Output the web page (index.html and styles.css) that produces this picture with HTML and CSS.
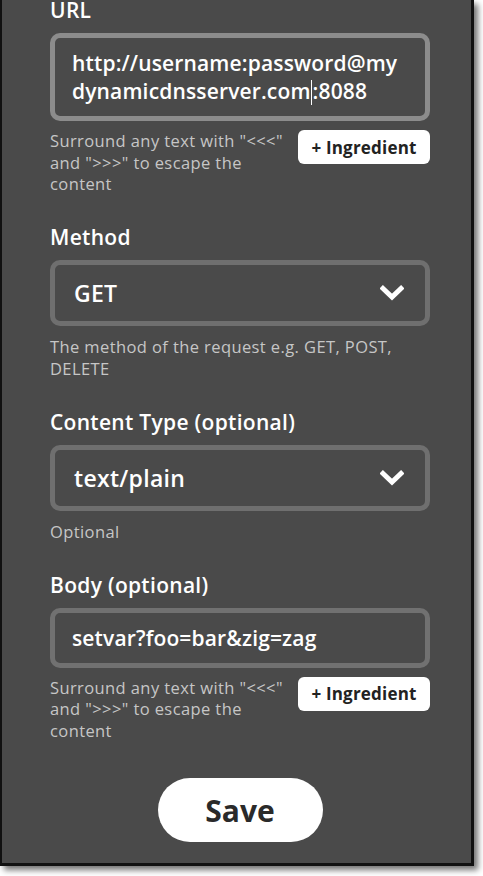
FILE: index.html
```html
<!DOCTYPE html>
<html>
<head>
<meta charset="utf-8">
<link rel="stylesheet" href="styles.css">
</head>
<body>
<div class="panel">
  <div class="form">
    <div class="field first">
      <div class="label">URL</div>
      <div class="input focused multi">http://username:password@my<br>dynamicdnsserver.com<span class="caret"></span>:8088</div>
      <div class="help-row">
        <p class="help">Surround any text with "&lt;&lt;&lt;"<br>and "&gt;&gt;&gt;" to escape the<br>content</p>
        <span class="ingredient">+ Ingredient</span>
      </div>
    </div>
    <div class="field">
      <div class="label">Method</div>
      <div class="select"><span class="value">GET</span>
        <svg class="chev" width="24" height="16" viewBox="0 0 24 16"><polyline points="3,3.5 12,12 21,3.5" fill="none" stroke="#fff" stroke-width="5" stroke-linecap="square"/></svg>
      </div>
      <p class="help">The method of the request e.g. GET, POST,<br>DELETE</p>
    </div>
    <div class="field">
      <div class="label">Content Type (optional)</div>
      <div class="select"><span class="value">text/plain</span>
        <svg class="chev" width="24" height="16" viewBox="0 0 24 16"><polyline points="3,3.5 12,12 21,3.5" fill="none" stroke="#fff" stroke-width="5" stroke-linecap="square"/></svg>
      </div>
      <p class="help">Optional</p>
    </div>
    <div class="field">
      <div class="label">Body (optional)</div>
      <div class="input single">setvar?foo=bar&amp;zig=zag</div>
      <div class="help-row">
        <p class="help">Surround any text with "&lt;&lt;&lt;"<br>and "&gt;&gt;&gt;" to escape the<br>content</p>
        <span class="ingredient">+ Ingredient</span>
      </div>
    </div>
    <div class="actions">
      <span class="save">Save</span>
    </div>
  </div>
</div>
</body>
</html>
```
FILE: styles.css
```css
html, body {
  margin: 0;
  padding: 0;
  background: #ffffff;
}
body {
  font-family: "Open Sans", "Liberation Sans", sans-serif;
  width: 483px;
  height: 876px;
  overflow: hidden;
}
.panel {
  width: 469px;
  height: 863px;
  background: #4a4a4a;
  border-left: 2px solid #111;
  border-right: 3px solid #111;
  border-bottom: 3px solid #111;
  box-shadow: 4px 4px 6px rgba(0,0,0,0.55);
  overflow: hidden;
}
.form {
  padding: 0 41px 0 48px;
  margin-top: -3px;
  display: flex;
  flex-direction: column;
}
.field {
  display: flex;
  flex-direction: column;
  margin-top: 29.5px;
}
.field.first {
  margin-top: 0;
}
.label {
  color: #ffffff;
  font-size: 21px;
  font-weight: 600;
  letter-spacing: 0.3px;
  line-height: 26px;
  margin-bottom: 10px;
}
.input {
  box-sizing: border-box;
  border: 5px solid #717171;
  border-radius: 10px;
  color: #ffffff;
  font-size: 21px;
  font-weight: 600;
  letter-spacing: 0.15px;
  padding: 0 17px;
}
.input.focused {
  border-color: #8c8c8c;
}
.input.multi {
  height: 88px;
  line-height: 28px;
  padding-top: 11px;
}
.input.single {
  height: 60px;
  display: flex;
  align-items: center;
}
.caret {
  display: inline-block;
  width: 1px;
  height: 25px;
  background: #fff;
  vertical-align: -6px;
  margin: 0 1px 0 0;
}
.select {
  box-sizing: border-box;
  height: 66px;
  border: 5px solid #6f6f6f;
  border-radius: 10px;
  display: flex;
  align-items: center;
  justify-content: space-between;
  padding: 0 21px 0 19px;
  color: #ffffff;
  font-size: 23px;
  font-weight: 600;
  letter-spacing: 0.3px;
}
.chev {
  display: block;
}
.help {
  margin: 10px 0 0 0;
  color: #c6c6c6;
  font-size: 16.5px;
  letter-spacing: 0.4px;
  line-height: 21.5px;
}
.help-row {
  display: flex;
  justify-content: space-between;
  align-items: flex-start;
  margin-top: 9px;
}
.help-row .help {
  margin: 0;
}
.ingredient {
  box-sizing: border-box;
  width: 132px;
  height: 34px;
  background: #ffffff;
  border-radius: 6px;
  color: #222222;
  font-size: 17px;
  font-weight: 700;
  letter-spacing: 0.2px;
  display: flex;
  align-items: center;
  justify-content: center;
}
.actions {
  display: flex;
  justify-content: center;
  margin-top: 37px;
}
.save {
  width: 165px;
  height: 64px;
  border-radius: 32px;
  background: #ffffff;
  color: #2a2a2a;
  font-size: 30px;
  font-weight: 700;
  display: flex;
  align-items: center;
  justify-content: center;
}
```
